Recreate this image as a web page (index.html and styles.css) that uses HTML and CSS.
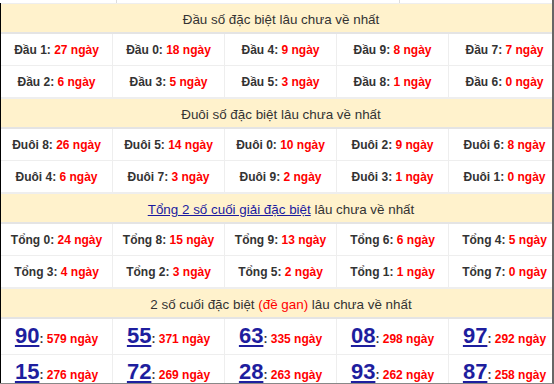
FILE: index.html
```html
<!DOCTYPE html>
<html lang="vi">
<head>
<meta charset="utf-8">
<link rel="stylesheet" href="styles.css">
</head>
<body>
<div class="page">
  <div class="strip"><span></span><span></span><span></span></div>
  <div class="tbl">
    <div class="hd">Đầu số đặc biệt lâu chưa về nhất</div>
    <div class="row">
      <div class="cell">Đầu 1: <b class="r">27 ngày</b></div>
      <div class="cell">Đầu 0: <b class="r">18 ngày</b></div>
      <div class="cell">Đầu 4: <b class="r">9 ngày</b></div>
      <div class="cell">Đầu 9: <b class="r">8 ngày</b></div>
      <div class="cell">Đầu 7: <b class="r">7 ngày</b></div>
    </div>
    <div class="row">
      <div class="cell">Đầu 2: <b class="r">6 ngày</b></div>
      <div class="cell">Đầu 3: <b class="r">5 ngày</b></div>
      <div class="cell">Đầu 5: <b class="r">3 ngày</b></div>
      <div class="cell">Đầu 8: <b class="r">1 ngày</b></div>
      <div class="cell">Đầu 6: <b class="r">0 ngày</b></div>
    </div>
    <div class="hd">Đuôi số đặc biệt lâu chưa về nhất</div>
    <div class="row">
      <div class="cell">Đuôi 8: <b class="r">26 ngày</b></div>
      <div class="cell">Đuôi 5: <b class="r">14 ngày</b></div>
      <div class="cell">Đuôi 0: <b class="r">10 ngày</b></div>
      <div class="cell">Đuôi 2: <b class="r">9 ngày</b></div>
      <div class="cell">Đuôi 6: <b class="r">8 ngày</b></div>
    </div>
    <div class="row">
      <div class="cell">Đuôi 4: <b class="r">6 ngày</b></div>
      <div class="cell">Đuôi 7: <b class="r">3 ngày</b></div>
      <div class="cell">Đuôi 9: <b class="r">2 ngày</b></div>
      <div class="cell">Đuôi 3: <b class="r">1 ngày</b></div>
      <div class="cell">Đuôi 1: <b class="r">0 ngày</b></div>
    </div>
    <div class="hd"><a class="lnk" href="#">Tổng 2 số cuối giải đặc biệt</a> lâu chưa về nhất</div>
    <div class="row">
      <div class="cell">Tổng 0: <b class="r">24 ngày</b></div>
      <div class="cell">Tổng 8: <b class="r">15 ngày</b></div>
      <div class="cell">Tổng 9: <b class="r">13 ngày</b></div>
      <div class="cell">Tổng 6: <b class="r">6 ngày</b></div>
      <div class="cell">Tổng 4: <b class="r">5 ngày</b></div>
    </div>
    <div class="row">
      <div class="cell">Tổng 3: <b class="r">4 ngày</b></div>
      <div class="cell">Tổng 2: <b class="r">3 ngày</b></div>
      <div class="cell">Tổng 5: <b class="r">2 ngày</b></div>
      <div class="cell">Tổng 1: <b class="r">1 ngày</b></div>
      <div class="cell">Tổng 7: <b class="r">0 ngày</b></div>
    </div>
    <div class="hd">2 số cuối đặc biệt <span class="rr">(đề gan)</span> lâu chưa về nhất</div>
    <div class="row big">
      <div class="cell"><a class="num" href="#">90</a>: <b class="r">579 ngày</b></div>
      <div class="cell"><a class="num" href="#">55</a>: <b class="r">371 ngày</b></div>
      <div class="cell"><a class="num" href="#">63</a>: <b class="r">335 ngày</b></div>
      <div class="cell"><a class="num" href="#">08</a>: <b class="r">298 ngày</b></div>
      <div class="cell"><a class="num" href="#">97</a>: <b class="r">292 ngày</b></div>
    </div>
    <div class="row big">
      <div class="cell"><a class="num" href="#">15</a>: <b class="r">276 ngày</b></div>
      <div class="cell"><a class="num" href="#">72</a>: <b class="r">269 ngày</b></div>
      <div class="cell"><a class="num" href="#">28</a>: <b class="r">263 ngày</b></div>
      <div class="cell"><a class="num" href="#">93</a>: <b class="r">262 ngày</b></div>
      <div class="cell"><a class="num" href="#">87</a>: <b class="r">258 ngày</b></div>
    </div>
  </div>
</div>
</body>
</html>
```
FILE: styles.css
```css
html, body {
  margin: 0;
  padding: 0;
  background: #fff;
}
body {
  font-family: "Liberation Sans", Arial, sans-serif;
  color: #333;
}
.page {
  width: 554px;
  height: 384px;
  box-sizing: border-box;
  overflow: hidden;
  border-right: 2px solid #666;
  border-bottom: 1px solid #888;
}
.strip {
  height: 3px;
  display: grid;
  grid-template-columns: 117px 283px 1fr;
}
.strip span {
  border-right: 1px solid #ddd;
}
.strip span:last-child {
  border-right: 0;
}
.tbl {
  width: 560px;
  border-left: 1px solid #000;
}
.hd {
  height: 31px;
  line-height: 29px;
  box-sizing: border-box;
  padding-top: 1px;
  background: #fff2cc;
  border-top: 1px solid #eee;
  border-bottom: 2px solid #e4e4e4;
  text-align: center;
  font-size: 13.4px;
  color: #333;
}
.lnk {
  color: #1a1aa0;
  text-decoration: underline;
}
.rr {
  color: #f00;
}
.row {
  display: grid;
  grid-template-columns: repeat(5, 112px);
}
.cell {
  height: 31px;
  border-bottom: 1px solid #eee;
  border-right: 1px solid #eee;
  display: flex;
  align-items: center;
  justify-content: center;
  white-space: pre;
  font-size: 12px;
  font-weight: bold;
  color: #333;
}
.r {
  color: #f00;
}
.big .cell {
  height: 36px;
  box-sizing: border-box;
  align-items: baseline;
  padding-top: 4px;
}
.num {
  font-size: 22px;
  font-weight: bold;
  color: #1e1e9e;
  text-decoration: underline;
}
```
